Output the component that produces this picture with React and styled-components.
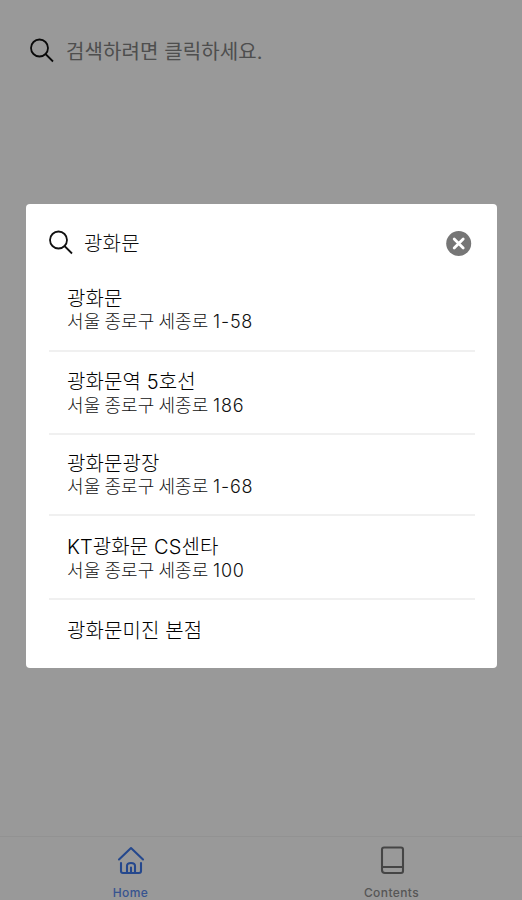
import React from 'react';
import styled, { createGlobalStyle } from 'styled-components';

const GlobalStyle = createGlobalStyle`
  * { box-sizing: border-box; }
  body {
    margin: 0;
    background: #fff;
    font-family: Inter, "Noto Sans CJK KR", sans-serif;
    font-weight: 300;
  }
`;

const Screen = styled.div`
  position: relative;
  display: flex;
  flex-direction: column;
  justify-content: space-between;
  width: 522px;
  height: 900px;
  overflow: hidden;
  background: #fff;
`;

const SearchBar = styled.div`
  display: flex;
  align-items: center;
  height: 30px;
  margin: 36px 28px 0 29px;
`;

const Placeholder = styled.span`
  margin: 2px 0 0 11px;
  font-size: 20px;
  font-weight: 400;
  line-height: 30px;
  letter-spacing: 0.1px;
  color: #828282;
  white-space: nowrap;
`;

const TabBar = styled.nav`
  display: grid;
  grid-template-columns: 1fr 1fr;
  height: 64px;
  border-top: 1px solid #f4f4f4;
`;

const Tab = styled.div`
  display: flex;
  flex-direction: column;
  align-items: center;
  padding-top: 9px;
  color: ${(p) => (p.$active ? '#5c8cf0' : '#909090')};
`;

const TabIcon = styled.svg`
  display: block;
  width: 30px;
  height: 30px;
  fill: none;
  stroke: ${(p) => (p.$active ? '#3f79ec' : '#747474')};
  stroke-width: 2.1;
  stroke-linecap: round;
  stroke-linejoin: round;
`;

const TabLabel = styled.span`
  margin-top: 10px;
  font-size: 12px;
  font-weight: 500;
  line-height: 14px;
  letter-spacing: 0.4px;
`;

const Backdrop = styled.div`
  position: absolute;
  inset: 0;
  padding: 204px 26px 0;
  background: rgba(0, 0, 0, 0.4);
`;

const Dialog = styled.section`
  width: 470.5px;
  height: 464px;
  padding-top: 24px;
  overflow: hidden;
  background: #fff;
  border-radius: 4px;
`;

const QueryRow = styled.div`
  display: flex;
  align-items: center;
  height: 30px;
  padding: 0 25px 0 22px;
`;

const Query = styled.span`
  flex: 1;
  margin: 2px 0 0 10px;
  font-size: 20px;
  line-height: 30px;
  letter-spacing: 0.2px;
  color: #0c0c0c;
`;

const SearchGlyph = styled.svg`
  display: block;
  width: 26px;
  height: 26px;
  fill: none;
  stroke: #111;
  stroke-width: 1.8;
`;

const ClearGlyph = styled.svg`
  display: block;
  width: 26px;
  height: 26px;
`;

const Results = styled.ul`
  margin: 10px 22px 0 23px;
  padding: 0;
  list-style: none;
`;

const Result = styled.li`
  height: ${(p) => p.$height}px;
  padding: ${(p) => p.$inset}px 0 0 18px;
  border-bottom: 2px solid #f0f0f0;
  white-space: nowrap;
  &:last-child { border-bottom: 0; }
`;

const Name = styled.div`
  font-size: 20px;
  line-height: 24px;
  letter-spacing: 0.1px;
  color: #000;
`;

const Address = styled.div`
  margin-top: ${(p) => p.$gap || 0}px;
  font-size: 18px;
  line-height: 24px;
  letter-spacing: 0.08px;
  word-spacing: -1px;
  color: #101010;
`;

const LotNumber = styled.span`
  margin-left: 0.5px;
  letter-spacing: ${(p) => p.$tracking}px;
`;

const street = '서울 종로구 세종로';

const places = [
  { name: '광화문', lot: '1-58', height: 84, inset: 19, gap: -1 },
  { name: '광화문역 5호선', lot: '186', height: 83, inset: 18 },
  { name: '광화문광장', lot: '1-68', height: 81, inset: 17, gap: -1 },
  { name: 'KT광화문 CS센타', lot: '100', height: 84, inset: 19 },
  { name: '광화문미진 본점', height: 68, inset: 19 },
];

const SearchIcon = () => (
  <SearchGlyph viewBox="0 0 26 26">
    <circle cx="10.5" cy="10" r="8.5" />
    <path d="M16.5 16L24 23.5" />
  </SearchGlyph>
);

const ClearIcon = () => (
  <ClearGlyph viewBox="0 0 26 26">
    <circle cx="12.7" cy="13.5" r="12.5" fill="#767676" />
    <path d="M8.2 9l9 9M17.2 9l-9 9" stroke="#fff" strokeWidth="2.8" strokeLinecap="round" />
  </ClearGlyph>
);

export default function App() {
  return (
    <>
      <GlobalStyle />
      <Screen>
        <SearchBar>
          <SearchIcon />
          <Placeholder>검색하려면 클릭하세요.</Placeholder>
        </SearchBar>
        <TabBar>
          <Tab $active>
            <TabIcon $active viewBox="0 0 30 30">
              <path d="M3 13.5L15 2l12 11.5" />
              <path d="M5 17v8q0 2 2 2h16q2 0 2-2v-8" />
              <path d="M11 26.5V20q0-3 4-3t4 3v6.5M15 21.5v5" />
            </TabIcon>
            <TabLabel>Home</TabLabel>
          </Tab>
          <Tab>
            <TabIcon viewBox="0 0 30 30">
              <path d="M7 1.5h17q2 0 2 2V25q0 2-2 2H8q-3 0-3-3V3.5q0-2 2-2zM6 21h20" />
            </TabIcon>
            <TabLabel>Contents</TabLabel>
          </Tab>
        </TabBar>
        <Backdrop>
          <Dialog>
            <QueryRow>
              <SearchIcon />
              <Query>광화문</Query>
              <ClearIcon />
            </QueryRow>
            <Results>
              {places.map((place) => (
                <Result key={place.name} $height={place.height} $inset={place.inset}>
                  <Name>{place.name}</Name>
                  {place.lot && (
                    <Address $gap={place.gap}>
                      {street} <LotNumber $tracking={0.8}>{place.lot}</LotNumber>
                    </Address>
                  )}
                </Result>
              ))}
            </Results>
          </Dialog>
        </Backdrop>
      </Screen>
    </>
  );
}
